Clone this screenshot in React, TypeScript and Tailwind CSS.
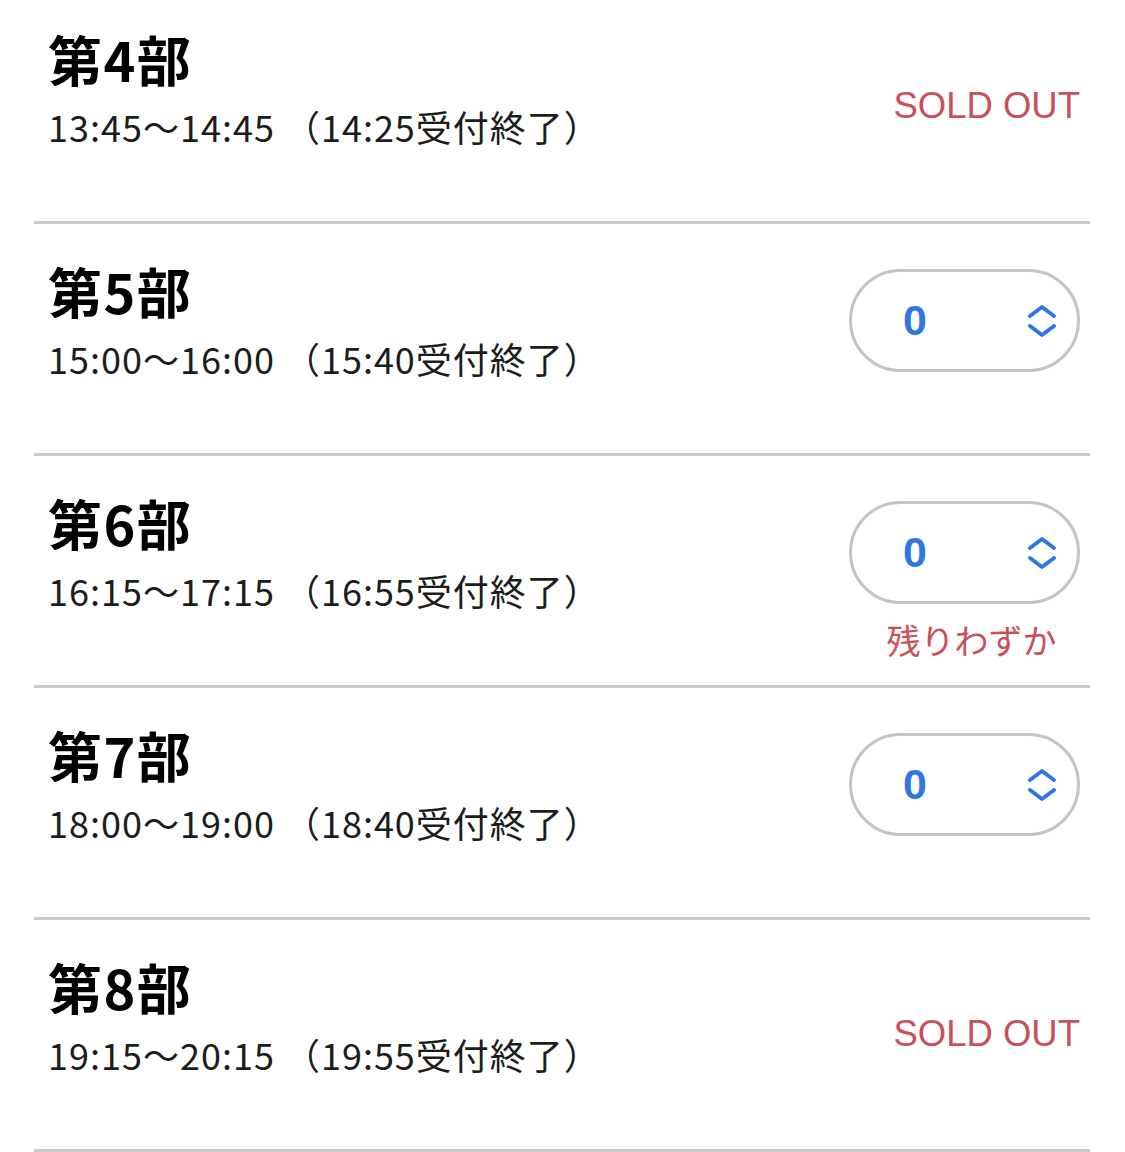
import React from "react";

type Slot = {
  name: string;
  time: string;
  status: "soldout" | "open" | "few";
};

const slots: Slot[] = [
  { name: "第4部", time: "13:45〜14:45 （14:25受付終了）", status: "soldout" },
  { name: "第5部", time: "15:00〜16:00 （15:40受付終了）", status: "open" },
  { name: "第6部", time: "16:15〜17:15 （16:55受付終了）", status: "few" },
  { name: "第7部", time: "18:00〜19:00 （18:40受付終了）", status: "open" },
  { name: "第8部", time: "19:15〜20:15 （19:55受付終了）", status: "soldout" },
];

function Chevrons() {
  return (
    <svg width="30" height="34" viewBox="0 0 30 34" fill="none">
      <path
        d="M3 12 L15 3 L27 12"
        stroke="#2f76e0"
        strokeWidth="4"
        strokeLinecap="round"
        strokeLinejoin="round"
      />
      <path
        d="M3 22 L15 31 L27 22"
        stroke="#2f76e0"
        strokeWidth="4"
        strokeLinecap="round"
        strokeLinejoin="round"
      />
    </svg>
  );
}

function Stepper() {
  return (
    <div className="flex h-[103px] w-[231px] items-center rounded-full border-[3px] border-[#c4c4c4] bg-white pl-[48px] pr-[20px]">
      <span className="w-[30px] text-center text-[43px] font-semibold leading-none text-[#2f76e0] [font-family:'Liberation_Sans',Arial,sans-serif]">
        0
      </span>
      <span className="ml-auto flex items-center">
        <Chevrons />
      </span>
    </div>
  );
}

function Row({ slot }: { slot: Slot }) {
  return (
    <div className="flex h-[232px] border-b-[3px] border-[#c8c8c8]">
      <div className="flex flex-1 flex-col pl-[14px] pt-[36px]">
        <div className="text-[54px] font-bold leading-[62px] tracking-[1.5px] text-black">
          {slot.name}
        </div>
        <div className="mt-[14px] text-[36px] leading-[44px] tracking-[1px] text-[#1c1c1c]">
          {slot.time}
        </div>
      </div>
      <div className="flex w-[260px] flex-col items-end pr-[10px]">
        {slot.status === "soldout" ? (
          <div className="mt-[92px] text-[36.5px] leading-[44px] text-[#c94f59] [font-family:'Liberation_Sans',Arial,sans-serif]">
            SOLD OUT
          </div>
        ) : (
          <div className="mt-[45px] flex flex-col items-center">
            <Stepper />
            {slot.status === "few" && (
              <div className="mt-[14px] pl-[14px] text-[34px] leading-[44px] text-[#c94f59]">
                残りわずか
              </div>
            )}
          </div>
        )}
      </div>
    </div>
  );
}

export default function App() {
  return (
    <div className="min-h-screen overflow-hidden bg-white [font-family:'Noto_Sans_CJK_JP','Noto_Sans',sans-serif]">
      <div className="-mt-[8px] mx-[34px] w-[1056px]">
        {slots.map((s) => (
          <Row key={s.name} slot={s} />
        ))}
      </div>
    </div>
  );
}
